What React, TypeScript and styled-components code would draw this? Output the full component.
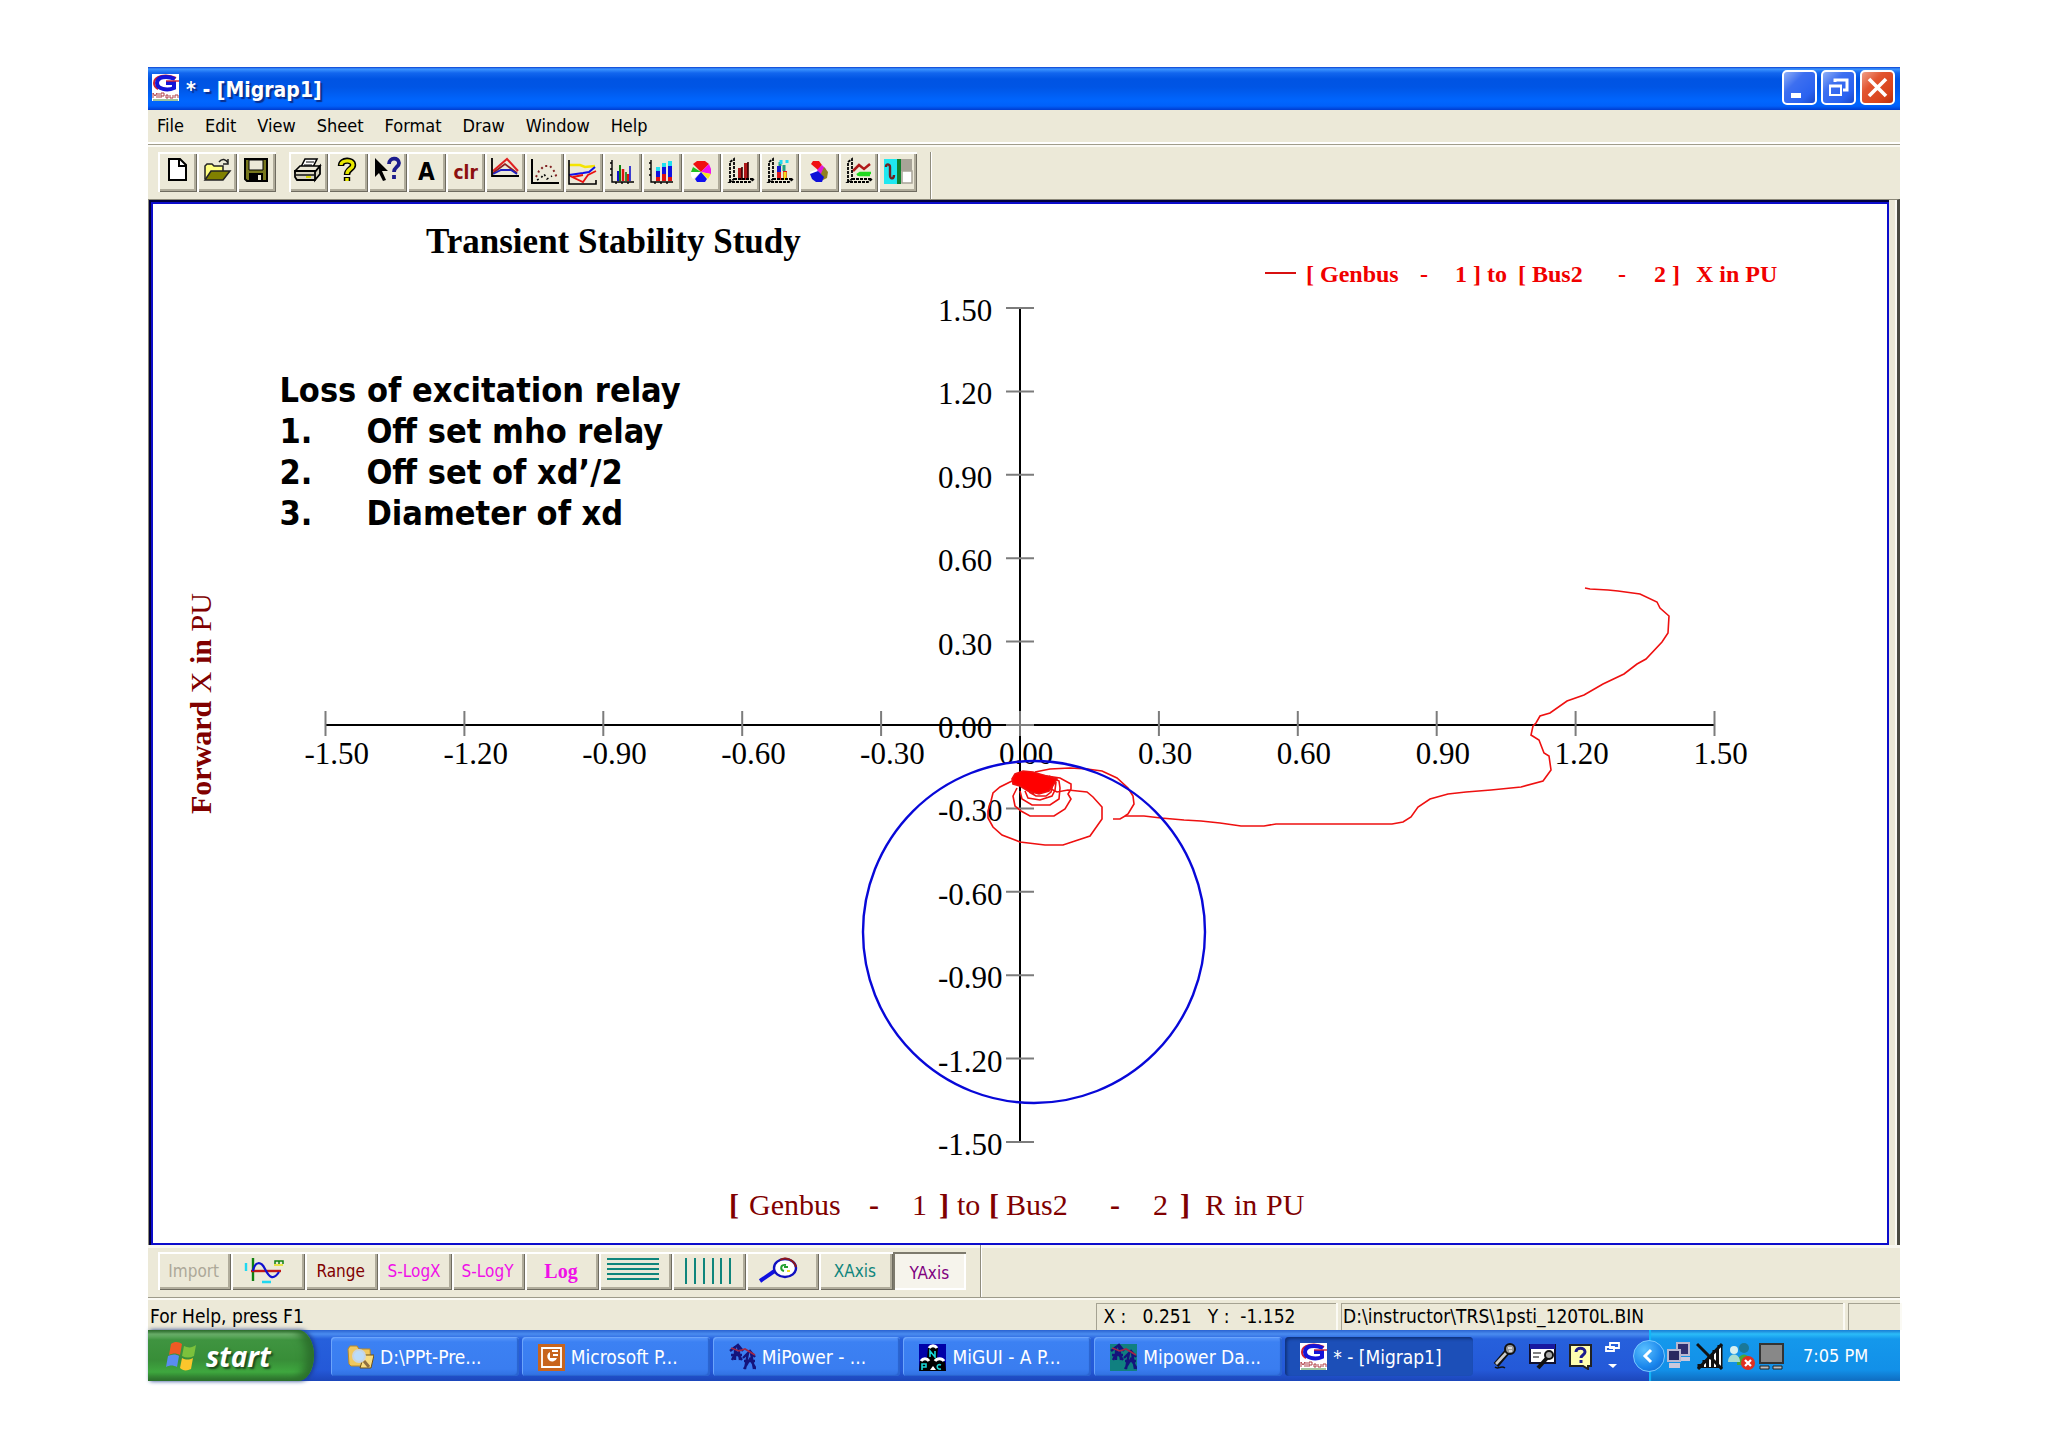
import React from "react";
import styled, { createGlobalStyle, css } from "styled-components";

const UI_FONT = `"DejaVu Sans Condensed", "DejaVu Sans", "Noto Sans", sans-serif`;
const SERIF = `"Liberation Serif", "Times New Roman", serif`;
const FACE = "#ece9d8";

const GlobalStyle = createGlobalStyle`
  *, *::before, *::after { box-sizing: border-box; }
  body { margin: 0; background: #fff; color: #000; font-family: ${UI_FONT}; }
  button { font: inherit; color: inherit; border: 0; padding: 0; background: none; }
  svg { display: block; flex: none; }
`;

const Page = styled.div`
  padding: 67px 148px;
`;

const Desktop = styled.div`
  display: flex;
  flex-direction: column;
  background: ${FACE};
`;

/* ---------- title bar ---------- */

const TitleBar = styled.header`
  display: flex;
  align-items: center;
  gap: 7px;
  height: 43px;
  padding: 0 5px 2px 4px;
  background: linear-gradient(#0a3fd0 0, #3d95ff 2px, #1266ee 6px, #0054e3 12px, #0055e5 20px, #0066ff 34px, #0060fa 39px, #003cd0 43px);
`;

const TitleText = styled.h1`
  flex: 1;
  margin: 0;
  padding-top: 4px;
  color: #fff;
  font-size: 21px;
  line-height: 28px;
  font-weight: bold;
  text-shadow: 2px 2px 1px #0a2f8c;
`;

const WindowButtons = styled.div`
  display: flex;
  gap: 4px;
`;

const WindowButton = styled.button<{ $close?: boolean }>`
  width: 35px;
  height: 35px;
  display: grid;
  place-items: center;
  border: 2px solid #fff;
  border-radius: 5px;
  background: ${(p) =>
    p.$close
      ? "linear-gradient(135deg, #f0a088 0, #e2552f 35%, #d8431c 75%, #b83010 100%)"
      : "linear-gradient(135deg, #8fb0f8 0, #3d6ff0 35%, #2a62f0 75%, #1a48c8 100%)"};
`;

/* ---------- menu and toolbars ---------- */

const MenuBar = styled.nav`
  display: flex;
  align-items: center;
  gap: 21px;
  height: 34px;
  padding: 0 9px;
  border-bottom: 2px solid #fff;
`;

const MenuItem = styled.button`
  font-size: 18px;
  line-height: 22px;
`;

const ToolBar = styled.div`
  display: flex;
  align-items: flex-start;
  height: 55px;
  padding: 7px 0 0 10px;
  border-top: 1px solid #a19d8c;
  box-shadow: inset 0 2px 0 #fbfaf4;
`;

const ToolGroup = styled.div<{ $count: number; $width: number }>`
  display: grid;
  grid-template-columns: repeat(${(p) => p.$count}, 1fr);
  width: ${(p) => p.$width}px;
  margin-right: 13px;
`;

const raised = css`
  box-shadow: inset 2px 2px 0 #fff, inset -1px -1px 0 #6f6c60, inset -3px -3px 0 #b0ac9b;
`;

const ToolButton = styled.button`
  height: 40px;
  display: grid;
  place-items: center;
  overflow: hidden;
  ${raised}
`;

const ToolText = styled.span<{ $color: string; $size: number }>`
  color: ${(p) => p.$color};
  font-size: ${(p) => p.$size}px;
  line-height: 24px;
  font-weight: bold;
`;

const BarEnd = styled.div`
  align-self: stretch;
  width: 2px;
  border-left: 1px solid #8f8c7d;
  background: #fff;
`;

const PlotBar = styled.div`
  display: flex;
  align-items: flex-start;
  height: 52px;
  padding-left: 10px;
  box-shadow: inset 0 3px 0 #f8f7f0;
`;

const PlotGroup = styled.div`
  display: grid;
  grid-template-columns: repeat(11, 1fr);
  width: 808px;
  margin: 7px 14px 0 0;
`;

const PlotButton = styled.button<{ $color?: string; $pressed?: boolean; $serif?: boolean }>`
  height: 38px;
  display: grid;
  place-items: center;
  overflow: hidden;
  padding-right: 2px;
  color: ${(p) => p.$color ?? "#000"};
  font-size: 17px;
  line-height: 22px;
  ${(p) => p.$serif && css`font-family: ${SERIF}; font-weight: bold; font-size: 20px;`}
  ${(p) =>
    p.$pressed
      ? css`
          background: #f6f4ec;
          box-shadow: inset 2px 2px 0 #7d7a6d, inset -2px -2px 0 #fff;
          padding: 3px 0 0 0;
        `
      : raised}
`;

/* ---------- drawing area ---------- */

const Workspace = styled.main`
  border: solid #8c897a;
  border-width: 1px 0 0 1px;
  padding-right: 8px;
  box-shadow: inset -2px 0 0 #fbfaf4;
  border-right: 3px solid #4a4a42;
`;

const Sheet = styled.div`
  border: solid #00003c;
  border-width: 2px 0 0 2px;
`;

const Canvas = styled.div`
  position: relative;
  background: #fff;
  border: 2px solid #0c0ccc;
`;

const Notes = styled.div`
  position: absolute;
  left: 7%;
  top: 16%;
  padding-left: 5px;
  font-size: 34px;
  line-height: 41px;
  font-weight: bold;
`;

const NotesHead = styled.p`
  margin: 0;
`;

const NotesList = styled.ol`
  list-style: none;
  margin: 0;
  padding: 0;
`;

const NotesItem = styled.li`
  display: grid;
  grid-template-columns: 87px auto;
`;

/* ---------- status bar ---------- */

const StatusBar = styled.footer`
  display: flex;
  align-items: stretch;
  gap: 5px;
  height: 33px;
  padding-top: 5px;
  border-top: 1px solid #9d9a8a;
  box-shadow: inset 0 2px 0 #fbfaf4;
  font-size: 18px;
  line-height: 27px;
`;

const StatusHelp = styled.div`
  flex: 1;
  padding-left: 2px;
  font-size: 19px;
`;

const StatusPane = styled.div<{ $width: number }>`
  width: ${(p) => p.$width}px;
  padding-left: 1px;
  font-size: 19px;
  line-height: 25px;
  border: solid #a5a292;
  border-width: 1px 0 0 1px;
  box-shadow: 2px 0 0 #fbfaf4;
  white-space: pre;
`;

/* ---------- task bar ---------- */

const TaskBar = styled.div`
  display: flex;
  height: 51px;
  color: #fff;
  background: linear-gradient(#2a62d0 0, #4a8cf0 4px, #2660dc 9px, #2459d8 40px, #1c46ba 51px);
`;

const StartButton = styled.button`
  display: flex;
  align-items: center;
  gap: 8px;
  width: 166px;
  padding-left: 17px;
  border-radius: 0 16px 16px 0 / 0 26px 26px 0;
  background: linear-gradient(#2d6a2d 0, #74b874 4px, #3f9440 10px, #388e38 30px, #3fa83f 42px, #2c6e2c 51px);
  box-shadow: inset -8px 0 8px #2c702c, 2px 0 4px #1a3c90;
  font-family: "Open Sans", "Noto Sans", sans-serif;
  font-size: 28px;
  line-height: 36px;
  font-weight: bold;
  font-style: italic;
  text-shadow: 2px 2px 2px #1c481c;
`;

const Tasks = styled.div`
  flex: 0 1 1142px;
  min-width: 0;
  display: grid;
  grid-template-columns: repeat(6, 1fr);
  gap: 3px;
  margin: 7px 0 5px 17px;
`;

const TaskButton = styled.button<{ $active?: boolean }>`
  display: flex;
  align-items: center;
  gap: 6px;
  min-width: 0;
  padding-left: 15px;
  border-radius: 4px;
  font-size: 19px;
  line-height: 22px;
  white-space: pre;
  background: ${(p) =>
    p.$active ? "#1c4fb8" : "linear-gradient(#5a98fa 0, #3c81f3 5px, #3a7df0 32px, #3070e0 39px)"};
  box-shadow: ${(p) => (p.$active ? "inset 2px 2px 3px #10327c" : "inset 1px 1px 0 #6ba4fb, inset -2px -1px 1px #2a63cf")};
`;

const LanguageBar = styled.div`
  flex: 1;
  display: flex;
  align-items: center;
  justify-content: flex-end;
  gap: 12px;
  padding: 0 29px 0 18px;
`;

const Tray = styled.div`
  position: relative;
  display: flex;
  align-items: center;
  gap: 3px;
  width: 251px;
  padding-left: 16px;
  background: linear-gradient(#1a78d0 0, #2bbcf8 4px, #1498ec 9px, #1290e8 40px, #0f6cc0 51px);
  box-shadow: inset 2px 0 1px #12b8f8;
`;

const TrayToggle = styled.button`
  position: absolute;
  left: -16px;
  top: 10px;
  width: 32px;
  height: 32px;
  display: grid;
  place-items: center;
  border-radius: 50%;
  border: 1px solid #7ac8ff;
  background: radial-gradient(circle at 35% 30%, #5ac0ff, #1a86ec 60%, #1060c8);
`;

const Clock = styled.time`
  margin-left: 16px;
  font-size: 18px;
  line-height: 22px;
`;

/* ---------- icons ---------- */

const Tool = ({ children }: { children: React.ReactNode }) => (
  <svg width="39" height="39" viewBox="0 0 39 39" fill="none" aria-hidden="true">
    {children}
  </svg>
);

const AppLogo = () => (
  <svg width="27" height="27" viewBox="0 0 27 27" fill="none" aria-hidden="true">
    <rect width="27" height="27" fill="#fff" />
    <path d="M24 4C14-1 2 2 2 9c0 3 2 5 4 6" stroke="#d02030" strokeWidth="2" />
    <path d="M23 5C14 1 5 3 5 9s10 8 17 5V9h-8" stroke="#1414d8" strokeWidth="4" />
    <path d="M14 7h13" stroke="#d02030" strokeWidth="1.4" />
    <path d="M1 24v-5l2 3 2-3v5M7 19v5M9 24v-5h3v3h-3M14 21h2v3h-2zM18 21v3h3v-3M23 24v-3h3v3" stroke="#b04048" strokeWidth="1" />
    <path d="M1 26h25" stroke="#3c8c3c" strokeWidth="1" />
  </svg>
);

const NewIcon = () => (
  <Tool>
    <path d="M11 6h11l6 6v15H11z" fill="#fff" stroke="#000" strokeWidth="2" />
    <path d="M21 6v7h7" stroke="#000" strokeWidth="2" />
  </Tool>
);
const OpenIcon = () => (
  <Tool>
    <path d="M8 26V13l2-2h5l2 2h9v5" fill="#ffff80" stroke="#222" strokeWidth="1.5" />
    <path d="M8 27l6-9h19l-7 9z" fill="#808000" stroke="#222" strokeWidth="1.5" />
    <path d="M22 9c3-4 7-3 9 1M31 6v5h-5" stroke="#222" strokeWidth="1.5" />
  </Tool>
);
const SaveIcon = () => (
  <Tool>
    <path d="M8 6h22v22H10l-2-2z" fill="#77771c" stroke="#000" strokeWidth="2" />
    <path d="M12 7h14v10H12z" fill="#ece9d8" stroke="#000" />
    <path d="M12 20h14v8H12z" fill="#000" />
    <path d="M21 22h3v5h-3z" fill="#ece9d8" />
  </Tool>
);
const PrintIcon = () => (
  <Tool>
    <path d="M12 14l4-8h12l-4 8z" fill="#fff" stroke="#000" strokeWidth="1.6" />
    <path d="M17 9h8M15 12h8" stroke="#000" />
    <path d="M6 18l5-5h20l-5 6H6z" fill="#ece9d8" stroke="#000" strokeWidth="1.6" />
    <path d="M6 18h20v9H8l-2-3zM26 19l5-6v8l-5 6z" fill="#d8d4c0" stroke="#000" strokeWidth="1.8" />
    <path d="M7 22h18" stroke="#000" strokeWidth="1.4" />
    <path d="M17 24h5" stroke="#d8d800" strokeWidth="2" />
  </Tool>
);
const HelpIcon = () => (
  <Tool>
    <path d="M13 13c0-7 12-7 12-1 0 4-6 4-6 10M19 24v4" stroke="#000" strokeWidth="6.4" />
    <path d="M13 12c0-5 12-6 12 0 0 4-6 4-6 9M19 25v3" stroke="#e8e800" strokeWidth="3.4" />
  </Tool>
);
const WhatsThisIcon = () => (
  <Tool>
    <path d="M7 5v19l4-4 4 8 3-1-4-9h6z" fill="#000" />
    <path d="M21 11c0-7 10-7 10-1 0 4-5 4-5 9M26 22v4" stroke="#1c1c8c" strokeWidth="3.8" />
  </Tool>
);
const AreaIcon = () => (
  <Tool>
    <path d="M8 18L22 6l11 12" stroke="#e02020" strokeWidth="2" />
    <path d="M8 20l12-9 12 9" stroke="#902020" strokeWidth="1.8" />
    <path d="M8 21l8-4h10l6 4" stroke="#2020c0" strokeWidth="1.8" />
    <path d="M7 5v18h27" stroke="#000" strokeWidth="1.8" />
  </Tool>
);
const ScatterIcon = () => (
  <Tool>
    <path d="M7 6v24h27" stroke="#000" strokeWidth="2" />
    <path d="M11 24l3-6 5-5 6 0 4 5 3 7" stroke="#802020" strokeWidth="2" strokeDasharray="2 3" />
    <path d="M12 27l4-2 3-4 3 5 5-3" stroke="#000" strokeWidth="1.6" strokeDasharray="2 3" />
  </Tool>
);
const LinesIcon = () => (
  <Tool>
    <path d="M5 12h11l5 2 10-1" stroke="#f4e400" strokeWidth="2.5" />
    <path d="M5 22l14-2 6-1 6-5" stroke="#1010e8" strokeWidth="2" />
    <path d="M6 23l13 6 5-7 8-4M9 24l10-2" stroke="#e81010" strokeWidth="1.8" />
    <path d="M5 7v24h27v-4" stroke="#000" strokeWidth="1.6" />
  </Tool>
);
const BarsIcon = () => (
  <Tool>
    <path d="M15 28V18" stroke="#1010d0" strokeWidth="2" />
    <path d="M17 28V12" stroke="#108010" strokeWidth="2" />
    <path d="M20 28V16M25 28v-7" stroke="#e01010" strokeWidth="2.5" />
    <path d="M27 28V13" stroke="#1010d0" strokeWidth="1.6" />
    <path d="M23 28v-9" stroke="#108010" strokeWidth="1.6" />
    <path d="M9 7v22h22M7 10h2M7 16h2M7 22h2M13 31v-2M19 31v-2M25 31v-2" stroke="#000" strokeWidth="1.4" />
  </Tool>
);
const StackIcon = () => (
  <Tool>
    <path d="M16 14v4M22 10v4M28 8v5" stroke="#20e0f0" strokeWidth="4" />
    <path d="M16 18v6M22 14v8M28 13v11" stroke="#1010e0" strokeWidth="4" />
    <path d="M16 24v4M22 21v7M28 24v4" stroke="#e01010" strokeWidth="4" />
    <path d="M9 7v22h22M7 10h2M7 16h2M7 22h2M13 31v-2M19 31v-2M25 31v-2" stroke="#000" strokeWidth="1.4" />
  </Tool>
);
const PieIcon = () => (
  <Tool>
    <path d="M9 19h10l-8 7-2-3z" fill="#fff" />
    <path d="M19 19l-8-8 4-3h8l4 3z" fill="#f01010" />
    <path d="M19 19l8-8 2 5v5z" fill="#f010f0" />
    <path d="M19 19l10 2-3 5z" fill="#f0e820" />
    <path d="M19 19l6 7-2 3h-8l-2-3z" fill="#1010f0" />
    <path d="M19 19l-8-5-2 5z" fill="#20c020" />
  </Tool>
);
const Bars3dIcon = () => (
  <Tool>
    <path d="M19 27V15M25 27V10" stroke="#b01818" strokeWidth="4" />
    <path d="M21 27V14M27 27V9" stroke="#300" strokeWidth="1.6" />
    <path d="M9 29V9l4-3v20l-4 3h20l4-3H13" stroke="#000" strokeWidth="1.8" strokeDasharray="3 1" />
  </Tool>
);
const BarsMultiIcon = () => (
  <Tool>
    <path d="M19 27v-8M25 27v-9" stroke="#e01818" strokeWidth="4" />
    <path d="M19 19v-6" stroke="#1818d0" strokeWidth="4" />
    <path d="M25 27v-8" stroke="#f0e020" strokeWidth="3" />
    <path d="M24 18v-6M20 13v-4" stroke="#20a080" strokeWidth="3" />
    <path d="M21 11V7M27 10V7" stroke="#20d8f0" strokeWidth="3" />
    <path d="M9 29V9l4-3v20l-4 3h20l4-3H13" stroke="#000" strokeWidth="1.8" strokeDasharray="3 1" />
  </Tool>
);
const Pie3dIcon = () => (
  <Tool>
    <path d="M11 19l8-3 1 6-8 1z" fill="#fff" />
    <path d="M12 11l2-3h6l3 4-4 5z" fill="#f01010" />
    <path d="M18 17l5-5 4 4 1 5-5 2z" fill="#e018e0" />
    <path d="M25 14l4 5-1 6-4 2-3-4z" fill="#908020" />
    <path d="M11 21l8-3 6 6-2 5h-6l-4-3z" fill="#1010d8" />
  </Tool>
);
const Line3dIcon = () => (
  <Tool>
    <path d="M14 18l6-6 5 4 6-5" stroke="#b01818" strokeWidth="2.5" />
    <path d="M18 22l3-2h11M20 22h11" stroke="#20d820" strokeWidth="2.4" />
    <path d="M9 29V9l4-3v20l-4 3h20l4-3H13" stroke="#000" strokeWidth="1.8" strokeDasharray="3 1" />
  </Tool>
);
const SplitIcon = () => (
  <Tool>
    <path d="M6 6h14v25H6z" fill="#20e8f0" />
    <path d="M20 6h14v12H20z" fill="#a8a498" />
    <path d="M24 18h10v12H24z" fill="#fff" stroke="#a8a498" strokeWidth="1.5" />
    <path d="M19 6h4v25h-4z" fill="#108030" />
    <path d="M8 14c0-4 4-3 4 0v8c0 5 4 4 4 0" stroke="#702020" strokeWidth="2.4" />
  </Tool>
);

const Plot = ({ children }: { children: React.ReactNode }) => (
  <svg width="72" height="37" viewBox="0 0 72 37" fill="none" aria-hidden="true">
    {children}
  </svg>
);
const WaveIcon = () => (
  <Plot>
    <path d="M15 10v8M31 29h9" stroke="#20d8f0" strokeWidth="2.4" />
    <path d="M22 5v23" stroke="#108010" strokeWidth="2.4" />
    <path d="M20 18h30" stroke="#c01818" strokeWidth="2.4" />
    <path d="M22 18c2-10 8-10 12-2s8 12 14 3" stroke="#1010d0" strokeWidth="2.2" />
    <path d="M44 11V8h8v3M48 8v3" stroke="#108010" strokeWidth="1.5" />
    <path d="M43 12h9" stroke="#e8e020" strokeWidth="1.6" />
  </Plot>
);
const RowsIcon = () => (
  <Plot>
    <path d="M8 6h52M8 11h52M8 16h52M8 21h52M8 26h52" stroke="#0f857c" strokeWidth="2" />
  </Plot>
);
const ColumnsIcon = () => (
  <Plot>
    <path d="M14 5v26M23 5v26M32 5v26M41 5v26M49 5v26M58 5v26" stroke="#0f857c" strokeWidth="2" />
  </Plot>
);
const ZoomIcon = () => (
  <Plot>
    <path d="M14 28l16-11" stroke="#1010e0" strokeWidth="4" />
    <ellipse cx="39" cy="15" rx="11" ry="9" fill="#fff" stroke="#1010c0" strokeWidth="2.4" />
    <path d="M34 7c5-3 14-1 16 7" stroke="#901818" strokeWidth="2" />
    <path d="M40 12c-6-1-6 5-2 6M38 14h4" stroke="#20a030" strokeWidth="2" />
    <path d="M41 18h3" stroke="#f0e020" strokeWidth="2" />
  </Plot>
);

const Small = ({ size = 28, children }: { size?: number; children: React.ReactNode }) => (
  <svg width={size} height="28" viewBox={`0 0 ${size} 28`} fill="none" aria-hidden="true">
    {children}
  </svg>
);

const WindowsFlag = () => (
  <svg width="33" height="30" viewBox="0 0 33 30" fill="none" aria-hidden="true">
    <path d="M6 3c4-3 8-2 11 0l-2 11c-4-2-7-2-11 0z" fill="#ee5a24" />
    <path d="M19 5c4 2 8 2 12-1l-2 11c-4 2-8 2-12 0z" fill="#7cc13c" />
    <path d="M3 15c4-2 8-2 11 0l-2 11c-4-2-7-2-11 0z" fill="#5a8cf0" />
    <path d="M17 17c4 2 7 2 11 0l-2 11c-4 2-8 2-11-1z" fill="#fbc62c" />
  </svg>
);
const FolderIcon = () => (
  <Small>
    <path d="M2 6l2-3h7l2 3h11l1 17H5L3 21z" fill="#f0c860" stroke="#b88828" />
    <path d="M14 25l4-13h10l-3 13z" fill="#f8dc80" stroke="#6c5018" />
    <circle cx="13" cy="13" r="6" fill="#bcdcfa" stroke="#c8d4e0" strokeWidth="2" />
    <path d="M18 18l5 6" stroke="#907040" strokeWidth="3" />
  </Small>
);
const SlidesIcon = () => (
  <Small>
    <path d="M1 1h27v27H1z" fill="#c8641c" />
    <path d="M5 5h19v19H5z" stroke="#fff" strokeWidth="1.8" />
    <path d="M13 9a5 5 0 1 0 7 6h-7z" fill="#fff" />
    <path d="M15 8h6M16 12h5" stroke="#fff" strokeWidth="2" />
  </Small>
);
const PylonIcon = ({ back }: { back?: string }) => (
  <Small>
    {back && <path d="M1 1h27v27H1z" fill={back} />}
    <path d="M2 8l8-6 5 6M7 3v14M10 3l2 14M4 17l4-8 6 8M3 12h11" stroke="#14147c" strokeWidth="2.4" />
    <path d="M15 15l7-7 5 6M20 10l-3 16M23 10l3 16M16 26l6-10 6 10M16 18h11" stroke="#14147c" strokeWidth="2.4" />
    <path d="M3 5l8 3 6-2 10 6" stroke="#a02848" strokeWidth="1.6" />
  </Small>
);
const GuiIcon = () => (
  <Small>
    <path d="M1 1h27v27H1z" fill="#0000a8" />
    <path d="M10 5l5-3 5 3-1 10 8 4 1 9H1l1-10 7-3z" fill="#000" />
    <path d="M11 5c2-3 6-3 8 0M3 18c2-3 6-3 8 0M17 18c2-3 7-3 9 0" stroke="#fff" strokeWidth="3" />
    <path d="M12 14V8l5 6V8M4 27v-6h4v3H4M23 22c-5-2-5 5 0 4" stroke="#18d8d8" strokeWidth="1.6" />
    <path d="M12 27l3-4 3 4" fill="#fff" />
  </Small>
);
const MicIcon = () => (
  <Small size={25}>
    <path d="M4 23L15 10" stroke="#111" strokeWidth="6" />
    <path d="M4 22L15 10" stroke="#ccc" strokeWidth="2.6" />
    <circle cx="18" cy="7" r="5" fill="#999" stroke="#111" strokeWidth="2" />
    <path d="M16 6h4M17 9h3" stroke="#eee" strokeWidth="1.4" />
    <path d="M3 25c3 3 6-2 10 1" stroke="#111" strokeWidth="1.5" />
  </Small>
);
const SpeechToolsIcon = () => (
  <Small size={27}>
    <path d="M1 3h25v18H1z" fill="#fff" stroke="#101030" strokeWidth="2" />
    <path d="M1 2h25v5H1z" fill="#1818a0" />
    <path d="M4 11h8M4 15h6" stroke="#555" strokeWidth="1.6" />
    <path d="M9 26l9-10" stroke="#111" strokeWidth="4" />
    <circle cx="20" cy="13" r="4" fill="#aaa" stroke="#111" strokeWidth="2" />
  </Small>
);
const LanguageHelpIcon = () => (
  <Small size={25}>
    <path d="M2 3h21v21h-3v3l-5-3H2z" fill="#ffffb0" stroke="#222" strokeWidth="2" />
    <path d="M8 10c0-5 9-5 9 0 0 3-4 3-4 6M13 18v3" stroke="#1c1c8c" strokeWidth="3" />
  </Small>
);
const RestoreBarIcon = () => (
  <svg width="15" height="30" viewBox="0 0 15 30" fill="none" aria-hidden="true">
    <path d="M5 2h9v5H5zM1 6h8v4H1z" stroke="#fff" strokeWidth="1.8" />
    <path d="M3 23h9l-4 4z" fill="#fff" />
  </svg>
);
const NetworkIcon = () => (
  <Small>
    <path d="M12 1h12v12H12z" fill="#303070" stroke="#b8b8d0" strokeWidth="2" />
    <path d="M14 15h11v4H14z" fill="#c8c8dc" />
    <path d="M3 8h12v11H3z" fill="#282860" stroke="#b8b8d0" strokeWidth="2" />
    <path d="M4 21h11v5H4z" fill="#c8c8dc" />
  </Small>
);
const SignalIcon = () => (
  <Small>
    <path d="M4 26v-4M9 26v-8M14 26V13M19 26V8M24 26V3" stroke="#111" strokeWidth="5" />
    <path d="M9 25v-6M14 25V14M19 25V9M24 25V4" stroke="#fff" strokeWidth="2" />
    <path d="M1 2l25 25M26 2L2 27" stroke="#111" strokeWidth="3" />
  </Small>
);
const MessengerIcon = () => (
  <Small>
    <circle cx="17" cy="6" r="5" fill="#1a7898" />
    <path d="M10 23c0-14 14-14 14 0z" fill="#48a838" />
    <circle cx="7" cy="8" r="4" fill="#d8f0f0" />
    <path d="M1 20c0-10 12-10 12 0z" fill="#a8dcd0" />
    <circle cx="21" cy="21" r="7" fill="#e03020" />
    <path d="M18 18l6 6M24 18l-6 6" stroke="#fff" strokeWidth="2.2" />
  </Small>
);
const DisplayIcon = () => (
  <Small size={26}>
    <path d="M2 2h23v19H2z" fill="#888" stroke="#333" strokeWidth="2" />
    <path d="M2 24h9v3H2zM15 24h9v3h-9z" fill="#bbb" stroke="#222" />
  </Small>
);

/* ---------- chart ---------- */

const ORIGIN_X = 867;
const ORIGIN_Y = 521;
const px = (v: number) => ORIGIN_X + 463 * v;
const py = (v: number) => ORIGIN_Y - 278 * v;
const TICKS = [-1.5, -1.2, -0.9, -0.6, -0.3, 0, 0.3, 0.6, 0.9, 1.2, 1.5];

const TRAJECTORY =
  "1432,384 1437,385 1455,386 1465,387 1487,390 1504,398 1507,404 1516,412 1515,429 1509,438 1493,455 1484,460 1471,470 1450,480 1431,491 1414,497 1397,509 1387,512 1383,519 1380,522 1378,531 1386,536 1391,549 1396,552 1398,566 1390,577 1368,583 1338,586 1313,588 1295,590 1277,595 1265,603 1258,613 1250,618 1239,620 1123,620 1111,622 1088,622 1067,619 1048,617 1031,616 1008,614 991,612 972,612 967,615 960,615";

const SWINGS = [
  "972,612 975,610 981,600 980,592 975,584 964,574 949,567 934,565 917,564 897,565 882,568",
  "896,584 904,588 915,586 934,588 940,593 949,603 949,615 937,632 925,636 910,641 892,641 867,638 849,631 840,623 835,614 835,607 838,597 840,589 847,583 859,577",
  "887,571 907,574 918,580 918,585 915,590 918,595 912,605 901,612 877,612 868,607 862,602 860,592 864,584",
  "896,572 906,577 907,584 906,595 897,601 879,601 869,595 867,587",
  "903,578 902,586 899,592 893,594 887,596 875,594 872,587",
  "900,580 898,588 893,592 883,592 876,588 881,590",
];

const CORE =
  "859,575 862,570 870,567 880,568 890,571 904,575 901,580 896,587 886,590 875,587 867,582 860,580";

const Chart = styled.svg`
  width: 100%;
  height: auto;
  font-family: ${SERIF};
`;
const SheetTitle = styled.text`
  font-size: 35px;
  font-weight: bold;
`;
const TickText = styled.text`
  font-size: 31px;
`;
const Legend = styled.text`
  font-size: 24px;
  font-weight: bold;
  fill: #f00000;
`;
const AxisTitle = styled.text`
  font-size: 30px;
  fill: #800000;
`;

const MigrapChart = () => (
  <Chart viewBox="0 0 1734 1039" fill="none">
    <SheetTitle x="273" y="49" fill="#000">Transient Stability Study</SheetTitle>

    <path d="M1112 69h31" stroke="#d81010" strokeWidth="2" />
    <Legend y="78">
      <tspan x="1153">[ Genbus</tspan>
      <tspan x="1267">-</tspan>
      <tspan x="1302">1 ] to</tspan>
      <tspan x="1365">[ Bus2</tspan>
      <tspan x="1465">-</tspan>
      <tspan x="1501">2 ]</tspan>
      <tspan x="1543">X in PU</tspan>
    </Legend>

    <g fill="#000">
      {TICKS.map((t) => (
        <TickText key={`x${t}`} x={px(t) - 21} y="560">{t.toFixed(2)}</TickText>
      ))}
      {TICKS.map((t) => (
        <TickText key={`y${t}`} x="785" y={py(t) + 13}>{t.toFixed(2)}</TickText>
      ))}
    </g>

    <path d={`M${px(-1.5)} ${ORIGIN_Y}H${px(1.5)}M${ORIGIN_X} ${py(1.5)}V${py(-1.5)}`} stroke="#000" strokeWidth="2" />
    {TICKS.map((t) => (
      <path
        key={t}
        d={`M${px(t)} ${ORIGIN_Y - 14}v25M${ORIGIN_X - 14} ${py(t)}h28`}
        stroke="#7c7c7c"
        strokeWidth="2"
      />
    ))}

    <g stroke="#ee1010" strokeWidth="1.6">
      <polyline points={TRAJECTORY} />
      {SWINGS.map((s) => (
        <polyline key={s} points={s} />
      ))}
      <polygon points={CORE} fill="#ff0000" />
    </g>
    <circle cx="881" cy="728" r="171" stroke="#0808d8" strokeWidth="2.4" />

    <AxisTitle transform="translate(58 610) rotate(-90)">
      <tspan fontWeight="bold">Forward</tspan> X <tspan fontWeight="bold">in</tspan> PU
    </AxisTitle>
    <AxisTitle y="1011">
      <tspan x="576" fontWeight="bold">[</tspan>
      <tspan x="596">Genbus</tspan>
      <tspan x="716" fontWeight="bold">-</tspan>
      <tspan x="759">1</tspan>
      <tspan x="786" fontWeight="bold">]</tspan>
      <tspan x="804">to</tspan>
      <tspan x="836" fontWeight="bold">[</tspan>
      <tspan x="853">Bus2</tspan>
      <tspan x="957" fontWeight="bold">-</tspan>
      <tspan x="1000">2</tspan>
      <tspan x="1027" fontWeight="bold">]</tspan>
      <tspan x="1052">R</tspan>
      <tspan x="1081">in</tspan>
      <tspan x="1113">PU</tspan>
    </AxisTitle>
  </Chart>
);

const MENUS = ["File", "Edit", "View", "Sheet", "Format", "Draw", "Window", "Help"];

const FILE_TOOLS: [string, React.ReactNode][] = [
  ["New", <NewIcon />],
  ["Open", <OpenIcon />],
  ["Save", <SaveIcon />],
];

const CHART_TOOLS: [string, React.ReactNode][] = [
  ["Print", <PrintIcon />],
  ["About", <HelpIcon />],
  ["Context help", <WhatsThisIcon />],
  ["Font", <ToolText $color="#000" $size={24}>A</ToolText>],
  ["Colour", <ToolText $color="#8c1010" $size={19}>clr</ToolText>],
  ["Area chart", <AreaIcon />],
  ["Scatter chart", <ScatterIcon />],
  ["Line chart", <LinesIcon />],
  ["Bar chart", <BarsIcon />],
  ["Stacked bar chart", <StackIcon />],
  ["Pie chart", <PieIcon />],
  ["3D bar chart", <Bars3dIcon />],
  ["3D stacked bar chart", <BarsMultiIcon />],
  ["3D pie chart", <Pie3dIcon />],
  ["3D line chart", <Line3dIcon />],
  ["Split view", <SplitIcon />],
];

const NOTES = ["Off set mho relay", "Off set of xd’/2", "Diameter of xd"];

export default function App() {
  return (
    <Page>
      <GlobalStyle />
      <Desktop>
        <TitleBar>
          <AppLogo />
          <TitleText>* - [Migrap1]</TitleText>
          <WindowButtons>
            <WindowButton aria-label="Minimize">
              <svg width="27" height="27" viewBox="0 0 27 27"><path d="M5 19h10v5H5z" fill="#fff" /></svg>
            </WindowButton>
            <WindowButton aria-label="Restore">
              <svg width="27" height="27" viewBox="0 0 27 27" fill="none" stroke="#fff">
                <path d="M10 8V6h12v10h-4" strokeWidth="3" />
                <path d="M5 12h11v9H5z" strokeWidth="2" />
                <path d="M4 12h13" strokeWidth="3" />
              </svg>
            </WindowButton>
            <WindowButton $close aria-label="Close">
              <svg width="27" height="27" viewBox="0 0 27 27" stroke="#fff" strokeWidth="3.6"><path d="M5 5l17 17M22 5L5 22" /></svg>
            </WindowButton>
          </WindowButtons>
        </TitleBar>

        <MenuBar>
          {MENUS.map((m) => (
            <MenuItem key={m}>{m}</MenuItem>
          ))}
        </MenuBar>

        <ToolBar>
          <ToolGroup $count={3} $width={118}>
            {FILE_TOOLS.map(([name, icon]) => (
              <ToolButton key={name} aria-label={name}>{icon}</ToolButton>
            ))}
          </ToolGroup>
          <ToolGroup $count={16} $width={628}>
            {CHART_TOOLS.map(([name, icon]) => (
              <ToolButton key={name} aria-label={name}>{icon}</ToolButton>
            ))}
          </ToolGroup>
          <BarEnd />
        </ToolBar>

        <Workspace>
          <Sheet>
            <Canvas>
              <MigrapChart />
              <Notes>
                <NotesHead>Loss of excitation relay</NotesHead>
                <NotesList>
                  {NOTES.map((n, i) => (
                    <NotesItem key={n}>
                      <span>{i + 1}.</span>
                      <span>{n}</span>
                    </NotesItem>
                  ))}
                </NotesList>
              </Notes>
            </Canvas>
          </Sheet>
        </Workspace>

        <PlotBar>
          <PlotGroup>
            <PlotButton $color="#aca899" disabled>Import</PlotButton>
            <PlotButton aria-label="Waveform"><WaveIcon /></PlotButton>
            <PlotButton $color="#800000">Range</PlotButton>
            <PlotButton $color="#f010e8">S-LogX</PlotButton>
            <PlotButton $color="#f010e8">S-LogY</PlotButton>
            <PlotButton $color="#f010e8" $serif>Log</PlotButton>
            <PlotButton aria-label="Horizontal grid"><RowsIcon /></PlotButton>
            <PlotButton aria-label="Vertical grid"><ColumnsIcon /></PlotButton>
            <PlotButton aria-label="Zoom"><ZoomIcon /></PlotButton>
            <PlotButton $color="#0f857c">XAxis</PlotButton>
            <PlotButton $color="#800080" $pressed>YAxis</PlotButton>
          </PlotGroup>
          <BarEnd />
        </PlotBar>

        <StatusBar>
          <StatusHelp>For Help, press F1</StatusHelp>
          <StatusPane $width={240}>{" X :   0.251   Y :  -1.152"}</StatusPane>
          <StatusPane $width={502}>D:\instructor\TRS\1psti_120T0L.BIN</StatusPane>
          <StatusPane $width={52} />
        </StatusBar>

        <TaskBar>
          <StartButton><WindowsFlag />start</StartButton>
          <Tasks>
            <TaskButton><FolderIcon />D:\PPt-Pre...</TaskButton>
            <TaskButton><SlidesIcon />Microsoft P...</TaskButton>
            <TaskButton><PylonIcon />MiPower - ...</TaskButton>
            <TaskButton><GuiIcon />MiGUI - A P...</TaskButton>
            <TaskButton><PylonIcon back="#108080" />Mipower Da...</TaskButton>
            <TaskButton $active><AppLogo />* - [Migrap1]</TaskButton>
          </Tasks>
          <LanguageBar>
            <MicIcon />
            <SpeechToolsIcon />
            <LanguageHelpIcon />
            <RestoreBarIcon />
          </LanguageBar>
          <Tray>
            <TrayToggle aria-label="Show hidden icons">
              <svg width="18" height="18" viewBox="0 0 18 18" fill="none" stroke="#fff" strokeWidth="3"><path d="M11 3L5 9l6 6" /></svg>
            </TrayToggle>
            <NetworkIcon />
            <SignalIcon />
            <MessengerIcon />
            <DisplayIcon />
            <Clock>7:05 PM</Clock>
          </Tray>
        </TaskBar>
      </Desktop>
    </Page>
  );
}
